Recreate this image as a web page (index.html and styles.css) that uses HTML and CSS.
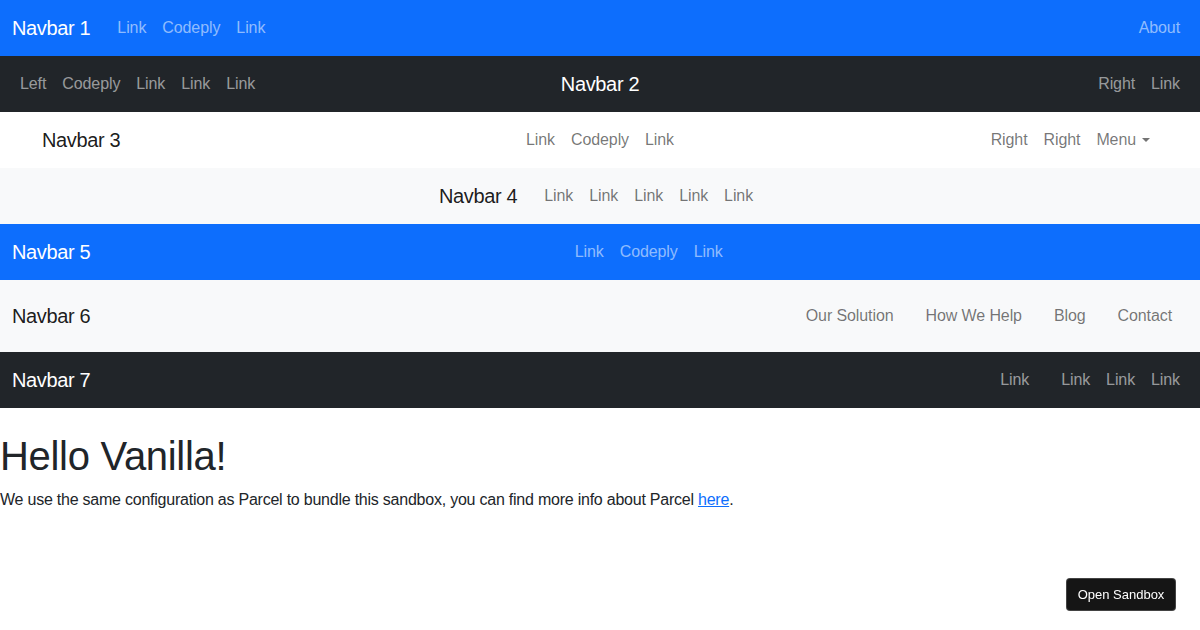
FILE: index.html
```html
<!DOCTYPE html>
<html lang="en">
<head>
<meta charset="utf-8">
<title>Navbars</title>
<link rel="stylesheet" href="styles.css">
</head>
<body>
<nav class="navbar bg-primary dark">
  <div class="container-fluid">
    <a class="brand" href="#">Navbar 1</a>
    <ul class="nav">
      <li><a class="link" href="#">Link</a></li>
      <li><a class="link" href="#">Codeply</a></li>
      <li><a class="link" href="#">Link</a></li>
    </ul>
    <ul class="nav push-right">
      <li><a class="link" href="#">About</a></li>
    </ul>
  </div>
</nav>

<nav class="navbar bg-dark dark">
  <div class="container-fluid three-col">
    <ul class="nav">
      <li><a class="link" href="#">Left</a></li>
      <li><a class="link" href="#">Codeply</a></li>
      <li><a class="link" href="#">Link</a></li>
      <li><a class="link" href="#">Link</a></li>
      <li><a class="link" href="#">Link</a></li>
    </ul>
    <a class="brand brand-center" href="#">Navbar 2</a>
    <ul class="nav end">
      <li><a class="link" href="#">Right</a></li>
      <li><a class="link" href="#">Link</a></li>
    </ul>
  </div>
</nav>

<nav class="navbar bg-white light">
  <div class="container three-col">
    <a class="brand" href="#">Navbar 3</a>
    <ul class="nav center">
      <li><a class="link" href="#">Link</a></li>
      <li><a class="link" href="#">Codeply</a></li>
      <li><a class="link" href="#">Link</a></li>
    </ul>
    <ul class="nav end">
      <li><a class="link" href="#">Right</a></li>
      <li><a class="link" href="#">Right</a></li>
      <li><a class="link caret" href="#">Menu</a></li>
    </ul>
  </div>
</nav>

<nav class="navbar bg-light light">
  <div class="container-fluid centered">
    <a class="brand" href="#">Navbar 4</a>
    <ul class="nav">
      <li><a class="link" href="#">Link</a></li>
      <li><a class="link" href="#">Link</a></li>
      <li><a class="link" href="#">Link</a></li>
      <li><a class="link" href="#">Link</a></li>
      <li><a class="link" href="#">Link</a></li>
    </ul>
  </div>
</nav>

<nav class="navbar bg-primary dark">
  <div class="container-fluid">
    <a class="brand" href="#">Navbar 5</a>
    <ul class="nav auto-center">
      <li><a class="link" href="#">Link</a></li>
      <li><a class="link" href="#">Codeply</a></li>
      <li><a class="link" href="#">Link</a></li>
    </ul>
  </div>
</nav>

<nav class="navbar bg-light light">
  <div class="container-fluid">
    <a class="brand" href="#">Navbar 6</a>
    <ul class="nav push-right tall">
      <li><a class="link" href="#">Our Solution</a></li>
      <li><a class="link" href="#">How We Help</a></li>
      <li><a class="link" href="#">Blog</a></li>
      <li><a class="link" href="#">Contact</a></li>
    </ul>
  </div>
</nav>

<nav class="navbar bg-dark dark">
  <div class="container-fluid">
    <a class="brand" href="#">Navbar 7</a>
    <ul class="nav push-right gap-after">
      <li><a class="link" href="#">Link</a></li>
    </ul>
    <ul class="nav">
      <li><a class="link" href="#">Link</a></li>
      <li><a class="link" href="#">Link</a></li>
      <li><a class="link" href="#">Link</a></li>
    </ul>
  </div>
</nav>

<main class="content">
  <h1 class="title">Hello Vanilla!</h1>
  <div class="lead-text">We use the same configuration as Parcel to bundle this sandbox, you can find more info about Parcel <a class="text-link" href="#">here</a>.</div>
</main>

<a class="sandbox-btn" href="#">Open Sandbox</a>
</body>
</html>
```

FILE: styles.css
```css
* { box-sizing: border-box; }

html, body {
  margin: 0;
  padding: 0;
}

body {
  font-family: "Liberation Sans", Arial, sans-serif;
  font-size: 16px;
  line-height: 1.5;
  color: #212529;
  background: #fff;
}

a { text-decoration: none; }

.navbar {
  padding: 8px 0;
}

.bg-primary { background: #0d6efd; }
.bg-dark { background: #212529; }
.bg-white { background: #fff; }
.bg-light { background: #f8f9fa; }

.container-fluid,
.container {
  display: flex;
  align-items: center;
  padding: 0 12px;
}

.container {
  width: 1140px;
  margin: 0 auto;
}

.three-col {
  display: grid;
  grid-template-columns: 1fr auto 1fr;
}

.centered {
  justify-content: center;
}

.brand {
  font-size: 20px;
  line-height: 30px;
  padding: 5px 0;
  margin-right: 19px;
  white-space: nowrap;
  letter-spacing: -0.35px;
}

.brand-center {
  margin-right: 0;
}

.dark .brand { color: #fff; }
.light .brand { color: rgba(0, 0, 0, 0.9); }

.nav {
  display: flex;
  list-style: none;
  margin: 0;
  padding: 0;
}

.nav.center { justify-self: center; }
.nav.end { justify-self: end; }
.push-right { margin-left: auto; }
.auto-center { margin: 0 auto; }
.gap-after { margin-right: 16px; }

.link {
  display: block;
  padding: 8px;
  line-height: 24px;
  white-space: nowrap;
  letter-spacing: -0.1px;
}

.tall .link {
  padding: 16px;
}

.dark .link { color: rgba(255, 255, 255, 0.55); }
.light .link { color: rgba(0, 0, 0, 0.55); }

.caret::after {
  content: "";
  display: inline-block;
  margin-left: 6px;
  vertical-align: 3px;
  border-top: 4.8px solid;
  border-right: 4.8px solid transparent;
  border-left: 4.8px solid transparent;
  border-bottom: 0;
}

.content {
  padding: 0;
}

.title {
  font-size: 40px;
  font-weight: 500;
  line-height: 1.2;
  margin: 24px 0 8px;
  letter-spacing: -0.3px;
}

.lead-text {
  font-size: 16px;
  letter-spacing: -0.23px;
}

.text-link {
  color: #0d6efd;
  text-decoration: underline;
}

.sandbox-btn {
  position: fixed;
  right: 24px;
  bottom: 19px;
  width: 110px;
  height: 33px;
  display: flex;
  align-items: center;
  justify-content: center;
  background: #151515;
  color: #fff;
  font-size: 13px;
  border-radius: 4px;
  border: 1px solid rgba(255, 255, 255, 0.2);
}
```
